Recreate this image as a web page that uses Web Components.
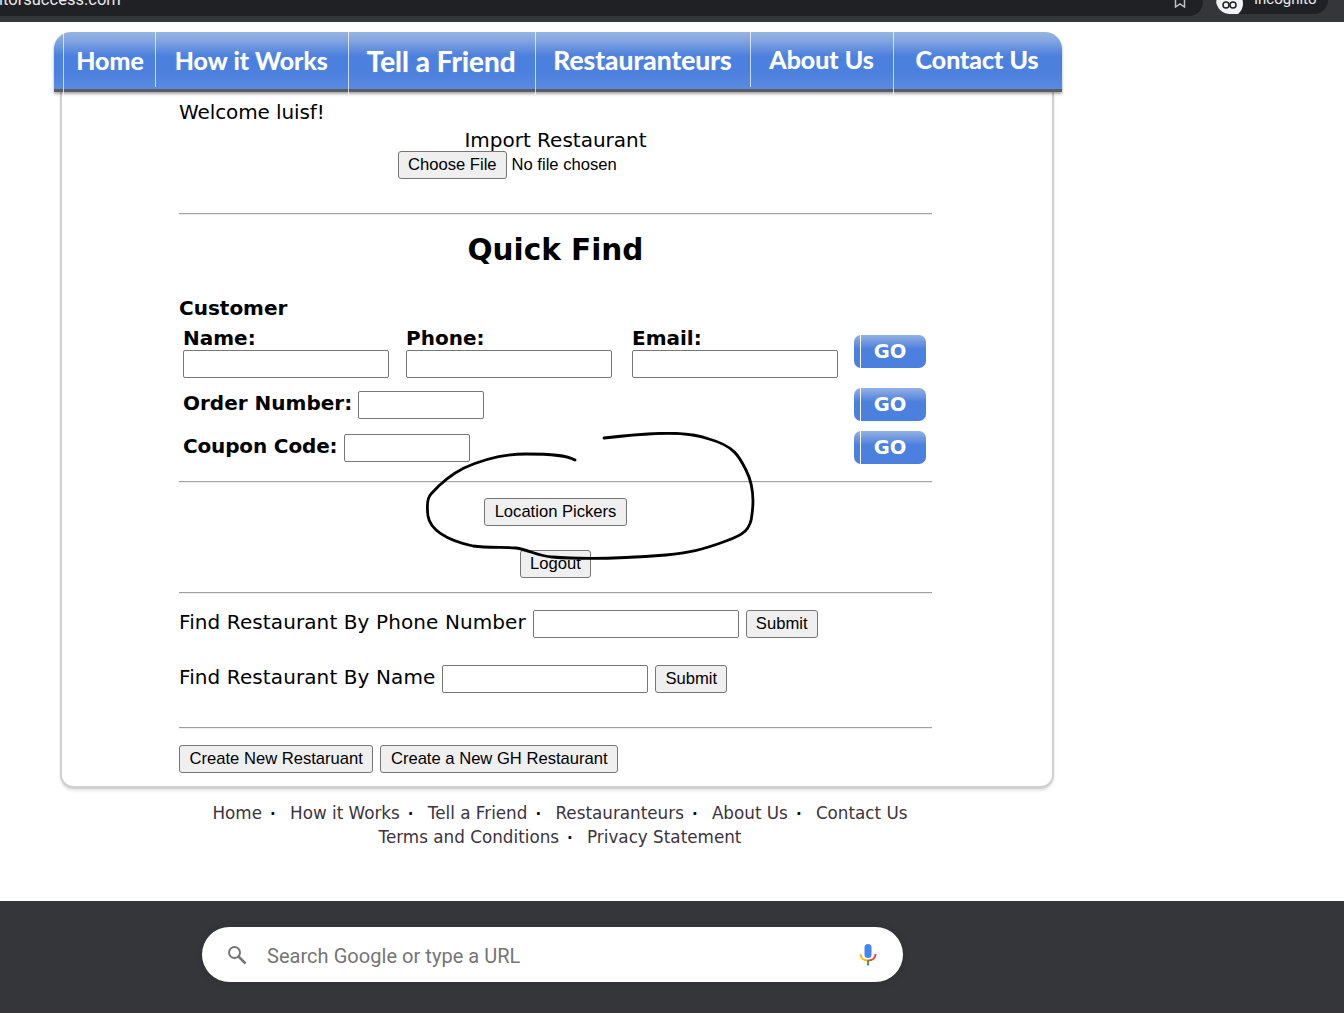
<!DOCTYPE html>
<html>
<head>
<meta charset="utf-8">
<title>Quick Find</title>
<style>
  html, body { margin: 0; padding: 0; background: #fff; }
  body { height: 1013px; overflow: hidden; font-family: "DejaVu Sans", sans-serif; }
</style>
</head>
<body>
<app-page></app-page>

<script>
// top of the browser window, cut off by the screenshot
class BrowserBar extends HTMLElement {
  constructor () {
    super()
    this.attachShadow({ mode: 'open' }).innerHTML = `
      <style>
        :host { display: block; height: 22px; background: #35363a; overflow: hidden; }
        .omni { height: 16px; margin-right: 141px; background: #202124; border-radius: 0 0 14px 0;
          display: flex; justify-content: space-between; align-items: flex-end; overflow: hidden; }
        .url { font: 16.500px/16px Roboto, sans-serif; color: #e8eaed; margin: 0 0 8px -1px; }
        svg { margin: 0 16px 8px 0; }
        .chip { position: absolute; top: -8px; right: 16px; width: 112px; height: 22px; background: #202124;
          border-radius: 0 0 14px 14px; display: flex; gap: 11px; align-items: flex-end; overflow: hidden; }
        .face { width: 27px; height: 27px; margin: 0 0 -3px 0; border-radius: 50%; background: #f1f3f4; flex: none; }
        .chip span { font: 15px/14px Roboto, sans-serif; color: #e8eaed; margin-bottom: 8px; }
      </style>
      <div class="omni">
        <span class="url">itorsuccess.com</span>
        <svg width="14" height="14" viewBox="0 0 14 14"><path d="M2.5 0v13L7 10l4.500 3V0" fill="none" stroke="#bdc1c6" stroke-width="1.500"/></svg>
      </div>
      <div class="chip">
        <div class="face"><svg style="margin:0" width="27" height="27" viewBox="0 0 27 27"><circle cx="10" cy="15" r="3" fill="none" stroke="#202124" stroke-width="1.500"/><circle cx="17" cy="15" r="3" fill="none" stroke="#202124" stroke-width="1.500"/></svg></div>
        <span>Incognito</span>
      </div>`
  }
}

class NavTab extends HTMLElement {
  constructor () {
    super()
    this.attachShadow({ mode: 'open' }).innerHTML = `
      <style>
        :host { display: flex; align-items: center; justify-content: center; position: relative; height: 56px;
          font: bold var(--fs, 25px)/1 Lato, sans-serif; color: #fff; }
        :host::before { content: ''; position: absolute; left: 0; top: 0; width: 1px; height: var(--line, 55px);
          background: rgba(255,255,255,.7); }
        span { position: relative; top: var(--dy, 0); left: var(--dx, 0); text-shadow: 0 0 1px rgba(255,255,255,.5); }
      </style>
      <span><slot></slot></span>`
  }
}

class NavBar extends HTMLElement {
  constructor () {
    super()
    this.attachShadow({ mode: 'open' }).innerHTML = `
      <style>
        :host { display: block; position: relative; z-index: 1; box-sizing: border-box; width: 1008px; height: 60px;
          margin: 10px 0 0 54px; padding-left: 9px; border-radius: 17px 17px 0 0;
          border-bottom: 3px solid #5a5d66;
          background: linear-gradient(#97b4e2 0, #8aaadf 6px, #4c80de 24px, #4c80de 40px, #5a8ae0 56px);
          box-shadow: 0 2px 3px rgba(0,0,0,.35); }
        .tabs { display: grid; height: 56px; grid-template-columns: 92px 192.500px 187.500px 215px 143px 168px; }
      </style>
      <div class="tabs"><slot></slot></div>`
  }
}

class GoButton extends HTMLElement {
  constructor () {
    super()
    this.attachShadow({ mode: 'open' }).innerHTML = `
      <style>
        :host { display: flex; align-items: center; justify-content: center; box-sizing: border-box;
          width: 72px; height: 33px; border-radius: 7px;
          background: linear-gradient(#94b1e3 0, #4c80de 14px, #4c80de 100%);
          font: bold 19.500px/1 "DejaVu Sans", sans-serif; color: #fff; position: relative; flex: none; }
        i { position: absolute; left: 6px; top: 0; bottom: 0; width: 1px; background: #fff; }
      </style>
      <i></i><slot></slot>`
  }
}

// a labelled row on the form, the button goes in the "action" slot
class FormRow extends HTMLElement {
  constructor () {
    super()
    this.attachShadow({ mode: 'open' }).innerHTML = `
      <style>
        :host { display: flex; justify-content: space-between; align-items: flex-start; }
      </style>
      <div><slot></slot></div>
      <slot name="action"></slot>`
  }
}

class SearchBox extends HTMLElement {
  constructor () {
    super()
    this.attachShadow({ mode: 'open' }).innerHTML = `
      <style>
        :host { display: flex; align-items: center; box-sizing: border-box; width: 701px; height: 55px;
          margin-left: 202px; padding: 0 26px 0 25px; background: #fff; border-radius: 28px;
          box-shadow: 0 1px 6px rgba(32,33,36,.28); }
        span { font: 20px Roboto, sans-serif; color: #757575; margin: 2px 0 0 20px; flex: 1; letter-spacing: .04px; }
      </style>
      <svg width="20" height="20" viewBox="0 0 20 20"><circle cx="7.500" cy="7.500" r="5.500" fill="none" stroke="#757575" stroke-width="2"/><path d="M11.500 11.500l7 7" stroke="#757575" stroke-width="2.500"/></svg>
      <span>Search Google or type a URL</span>
      <svg width="18" height="24" viewBox="0 0 18 24">
        <rect x="5.500" y="1" width="7" height="14" rx="3.500" fill="#4285f4"/>
        <path d="M1.500 11c0 4 3 6.500 7.500 6.500" fill="none" stroke="#fbbc05" stroke-width="2"/>
        <path d="M16.500 11c0 4-3 6.500-7.500 6.500" fill="none" stroke="#ea4335" stroke-width="2"/>
        <path d="M9 17.500v5" stroke="#34a853" stroke-width="2"/>
      </svg>`
  }
}

class FooterLinks extends HTMLElement {
  constructor () {
    super()
    this.attachShadow({ mode: 'open' }).innerHTML = `
      <style>
        :host { display: block; width: 1000px; margin: 12px 0 0 60px; text-align: center;
          font: 16.800px/24px "DejaVu Sans", sans-serif; color: #3d3340; }
        .sep { display: inline-block; width: 28px; padding-left: 8px; box-sizing: border-box; text-align: left;
          font: bold 15px/1 "DejaVu Sans", sans-serif; color: #111; }
      </style>
      <div>Home<span class="sep">·</span>How it Works<span class="sep">·</span>Tell a Friend<span class="sep">·</span>Restauranteurs<span class="sep">·</span>About Us<span class="sep">·</span>Contact Us</div>
      <div>Terms and Conditions<span class="sep">·</span>Privacy Statement</div>`
  }
}

class QuickFindCard extends HTMLElement {
  constructor () {
    super()
    this.attachShadow({ mode: 'open' }).innerHTML = `
      <style>
        :host { display: block; position: relative; box-sizing: border-box; width: 994px; height: 697px;
          margin-left: 60px; padding: 8px 0 0 117px; background: #fff;
          border: solid #d0d0d0; border-width: 0 2px 3px 2px; border-radius: 0 0 14px 14px;
          box-shadow: 0 2px 3px rgba(0,0,0,.1);
          font: 20px/24px "DejaVu Sans", sans-serif; color: #000; }
        .col { width: 753px; }
        hr { margin: 0; height: 0; border: 0; border-top: 1px solid #a0a0a0; border-bottom: 1px solid #eee; }
        input[type=text] { box-sizing: border-box; width: 206px; height: 28px; margin: 0; padding: 1px 2px;
          border: 1px solid #767676; border-radius: 2px; background: #fff; }
        input.short { width: 126px; }
        button, input[type=file]::file-selector-button { box-sizing: border-box; height: 28px; margin: 0; padding: 0 9.500px;
          font: 16.600px "Liberation Sans", sans-serif; color: #000; background: #efefef;
          border: 1px solid #767676; border-radius: 3px; }
        .center { text-align: center; }
        .import { margin-top: 4px; line-height: 24px; }
        input[type=file] { display: block; margin: -1px 0 0 219px; width: 316px; height: 28px; box-sizing: border-box; font: 16.600px "Liberation Sans", sans-serif; color: #000; }
        input[type=file]::file-selector-button { margin-right: 5px; padding: 0 9px; }
        h1 { margin: 17px 0 0; font: bold 29.500px/36px "DejaVu Sans", sans-serif; text-align: center; }
        h2 { margin: 28px 0 0; font: bold 20px/24px "DejaVu Sans", sans-serif; }
        .fields { display: grid; grid-template-columns: 223px 226px 206px; margin-left: 4px; }
        .fields label { display: flex; flex-direction: column; font-weight: bold; line-height: 21px; }
        .fields input { margin-top: 1px; }
        .rowtext { margin-left: 4px; font-weight: bold; }
        .rowtext input { vertical-align: top; }
        .find { display: flex; align-items: flex-start; gap: 7px; letter-spacing: .1px; }
        .find input { flex: none; }
        .find .submit { padding: 0 9px; }
      </style>
      <div class="col">
        <div style="letter-spacing:-.1px">Welcome luisf!</div>
        <div class="center import">Import Restaurant</div>
        <input type="file">
        <hr style="margin-top:34px">
        <h1>Quick Find</h1>
        <h2>Customer</h2>
        <form-row style="margin-top:8px;height:49px">
          <div class="fields">
            <label>Name:<input type="text"></label>
            <label>Phone:<input type="text"></label>
            <label>Email:<input type="text"></label>
          </div>
          <go-button slot="action" style="margin-top:7px;margin-right:6px">GO</go-button>
        </form-row>
        <form-row style="margin-top:14px;height:32px">
          <div class="rowtext">Order Number: <input class="short" type="text" style="margin-left:-1px"></div>
          <go-button slot="action" style="margin-top:-3px;margin-right:6px">GO</go-button>
        </form-row>
        <form-row style="margin-top:11px;height:32px">
          <div class="rowtext" style="letter-spacing:-.15px">Coupon Code: <input class="short" type="text"></div>
          <go-button slot="action" style="margin-top:-3px;margin-right:6px">GO</go-button>
        </form-row>
        <hr style="margin-top:15px">
        <div class="center" style="margin-top:15px"><button>Location Pickers</button></div>
        <div class="center" style="margin-top:24px"><button>Logout</button></div>
        <hr style="margin-top:14px">
        <div class="find" style="margin-top:16px">Find Restaurant By Phone Number <input type="text"><button class="submit">Submit</button></div>
        <div class="find" style="margin-top:27px">Find Restaurant By Name <input type="text"><button class="submit">Submit</button></div>
        <hr style="margin-top:34px">
        <div class="find" style="margin-top:16px"><button>Create New Restaruant</button><button>Create a New GH Restaurant</button></div>
      </div>
      <svg class="ink" style="position:absolute;left:364px;top:340px;pointer-events:none" width="330" height="130" viewBox="0 0 330 130">
        <path fill="none" stroke="#000" stroke-width="2.800" stroke-linecap="round" stroke-linejoin="round"
          d="M149 28C141 23 125 22 100 22C85 22 65 24 38 36C24 43 13 53 5 62C1 66 1 76 2 84C4 97 19 108 47 114C61 116 77 115 90 116C103 118 112 124 126 125C150 127 190 127 240 123C262 121 276 118 300 109C317 103 325 98 326 82C328 68 327 52 320 38C313 24 308 14 283 7C262 -1 230 0 178 6"/>
      </svg>`
  }
}

class AppPage extends HTMLElement {
  constructor () {
    super()
    this.attachShadow({ mode: 'open' }).innerHTML = `
      <style>
        :host { display: flex; flex-direction: column; position: relative; height: 1013px; overflow: hidden; }
        main { flex: 1; }
        footer { display: flex; align-items: flex-start; height: 112px; padding-top: 26px; box-sizing: border-box;
          background: #35363a; }
      </style>
      <browser-bar></browser-bar>
      <main>
        <nav-bar>
          <nav-tab style="--line:63px;--dx:1px">Home</nav-tab>
          <nav-tab>How it Works</nav-tab>
          <nav-tab style="--line:63px;--dy:1px;--fs:28px">Tell a Friend</nav-tab>
          <nav-tab style="--line:63px;--fs:26.500px">Restauranteurs</nav-tab>
          <nav-tab style="--dy:-1px">About Us</nav-tab>
          <nav-tab style="--line:63px;--dy:-1px">Contact Us</nav-tab>
        </nav-bar>
        <quick-find-card></quick-find-card>
        <footer-links></footer-links>
      </main>
      <footer><search-box></search-box></footer>`
  }
}

customElements.define('browser-bar', BrowserBar)
customElements.define('nav-tab', NavTab)
customElements.define('nav-bar', NavBar)
customElements.define('go-button', GoButton)
customElements.define('form-row', FormRow)
customElements.define('search-box', SearchBox)
customElements.define('footer-links', FooterLinks)
customElements.define('quick-find-card', QuickFindCard)
customElements.define('app-page', AppPage)
</script>
</body>
</html>
